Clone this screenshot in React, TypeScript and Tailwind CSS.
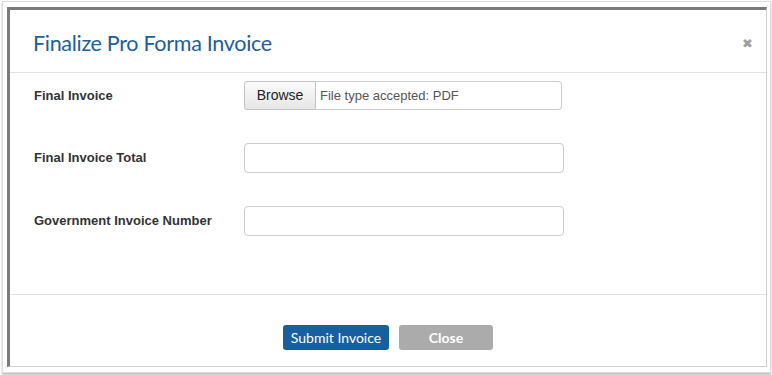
import React from "react";

const App: React.FC = () => {
  return (
    <div className="w-[772px] h-[375px] bg-white overflow-hidden">
      {/* screenshot frame */}
      <div className="ml-[2px] mt-[1px] w-[769px] h-[372px] border border-[#dcdcdc] pl-[4px] pt-[5px] shadow-[0_2px_2px_rgba(0,0,0,0.25)]">
        {/* modal */}
        <div className="w-[760px] h-[360px] bg-white border-t-[3px] border-l-[3px] border-t-[#7a7a7a] border-l-[#7a7a7a] border-r border-b border-r-[#cfcfcf] border-b-[#cfcfcf] flex flex-col">
          {/* header */}
          <div className="h-[63px] shrink-0 border-b border-[#e3e3e3] flex items-center justify-between pl-[23px] pr-[13px] pt-[4px]">
            <h1
              className="text-[21.5px] text-[#1d5e9b] tracking-[-0.3px]"
              style={{ fontFamily: "Lato, 'Open Sans', sans-serif" }}
            >
              Finalize Pro Forma Invoice
            </h1>
            <span
              className="text-[13px] text-[#a0a0a0] leading-none"
              style={{ fontFamily: "'DejaVu Sans', sans-serif" }}
            >
              ✖
            </span>
          </div>

          {/* body */}
          <div
            className="h-[222px] shrink-0 border-b border-[#e3e3e3] pl-[24px] pt-[8px] flex flex-col gap-[33px]"
            style={{ fontFamily: "'Liberation Sans', Arial, sans-serif" }}
          >
            <div className="flex items-center">
              <label className="w-[210px] text-[13px] font-bold text-[#333]">Final Invoice</label>
              <div className="flex h-[29px]">
                <button className="w-[72px] h-full border border-[#c4c4c4] rounded-l-[3px] bg-gradient-to-b from-[#fbfbfb] to-[#e6e6e6] text-[14px] text-[#222]">
                  Browse
                </button>
                <div className="w-[246px] h-full border border-l-0 border-[#cccccc] rounded-r-[4px] flex items-center px-[4px] text-[13px] text-[#555]">
                  File type accepted: PDF
                </div>
              </div>
            </div>
            <div className="flex items-center">
              <label className="w-[210px] text-[13px] font-bold text-[#333]">Final Invoice Total</label>
              <input className="w-[320px] h-[30px] border border-[#cccccc] rounded-[4px] outline-none" />
            </div>
            <div className="flex items-center">
              <label className="w-[210px] text-[13px] font-bold text-[#333]">Government Invoice Number</label>
              <input className="w-[320px] h-[30px] border border-[#cccccc] rounded-[4px] outline-none" />
            </div>
          </div>

          {/* footer */}
          <div
            className="flex-1 flex items-center justify-center gap-[10px] pt-[14px]"
            style={{ fontFamily: "Lato, 'Open Sans', sans-serif" }}
          >
            <button className="w-[106px] h-[25px] rounded-[3px] bg-[#16609f] text-white text-[14px]">
              Submit Invoice
            </button>
            <button className="w-[94px] h-[25px] rounded-[3px] bg-[#ababab] text-white text-[14px] font-bold">
              Close
            </button>
          </div>
        </div>
      </div>
    </div>
  );
};

export default App;
